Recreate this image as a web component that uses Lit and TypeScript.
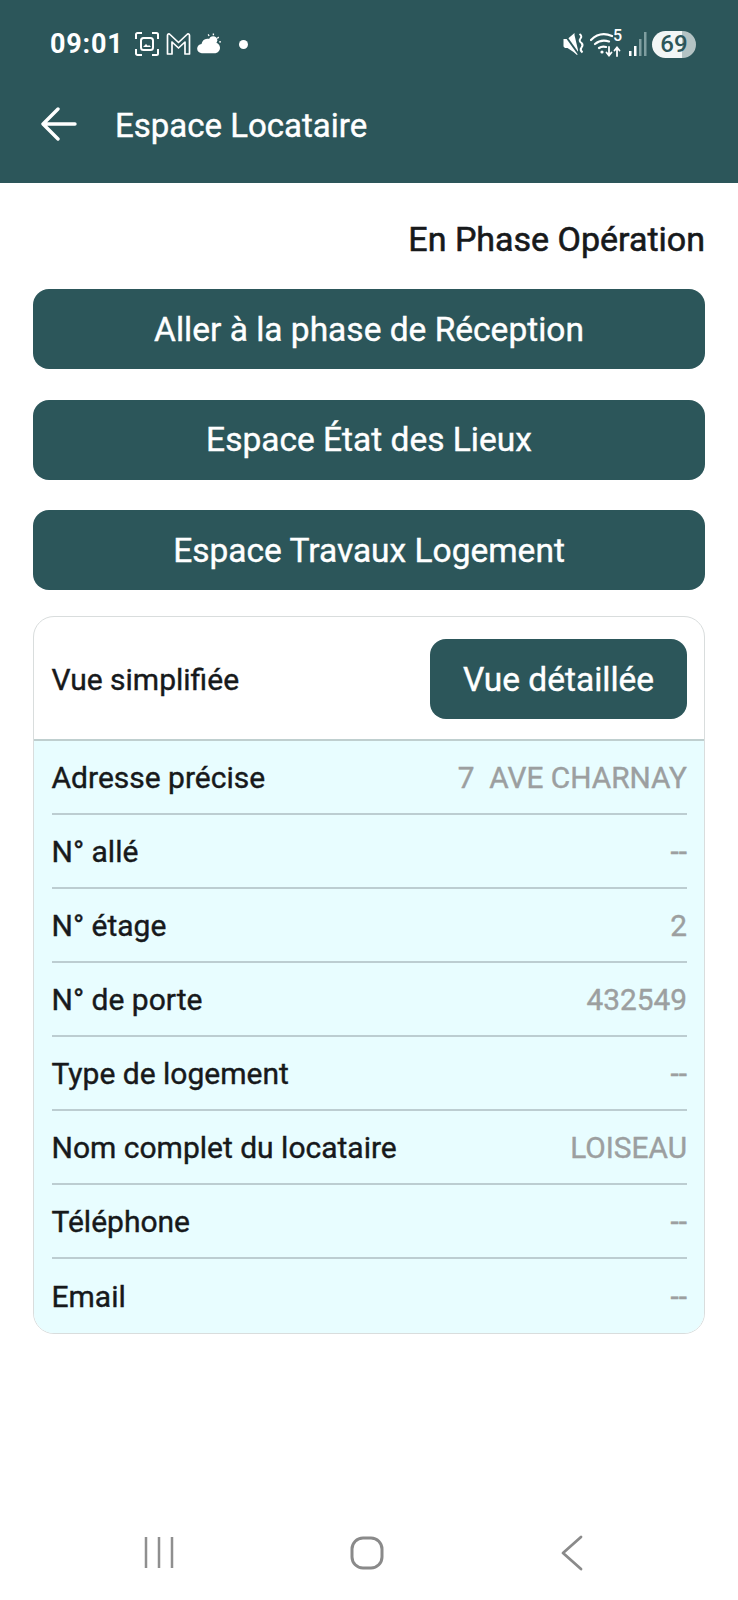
import { LitElement, html, css } from "lit";
import { customElement } from "lit/decorators.js";

const rows: [string, string][] = [
  ["Adresse précise", "7\u00a0 AVE CHARNAY"],
  ["N° allé", "--"],
  ["N° étage", "2"],
  ["N° de porte", "432549"],
  ["Type de logement", "--"],
  ["Nom complet du locataire", "LOISEAU"],
  ["Téléphone", "--"],
  ["Email", "--"],
];

@customElement("app-root")
export class AppRoot extends LitElement {
  static styles = css`
    :host {
      display: flex;
      flex-direction: column;
      width: 738px;
      height: 1600px;
      background: #fff;
      font-family: Roboto, "Liberation Sans", sans-serif;
      color: #17191b;
      overflow: hidden;
    }
    .top {
      background: #2c565a;
      height: 183px;
      box-sizing: border-box;
      color: #fff;
      flex: none;
    }
    .status {
      height: 88px;
      box-sizing: border-box;
      padding: 0 42px 0 50px;
      display: flex;
      align-items: center;
    }
    .time { font-size: 27px; font-weight: 700; letter-spacing: 0.8px; margin-right: 5px; }
    .status svg { display: block; flex: none; }
    .st-left { display: flex; align-items: center; gap: 5px; flex: 1; }
    .dot { width: 9px; height: 9px; border-radius: 50%; background: #fff; margin-left: 13px; }
    .st-right { display: flex; align-items: center; gap: 5px; }
    .wifi { position: relative; width: 34px; height: 28px; flex: none; }
    .wifi-five {
      position: absolute;
      right: 2px;
      top: -3px;
      font-size: 16px;
      line-height: 18px;
      font-weight: 500;
      color: #fff;
    }
    .batt {
      width: 44px; height: 27px; border-radius: 14px;
      background: linear-gradient(90deg, #f2f6f6 0 69%, #b4c3c4 69% 100%);
      color: #2c565a; font-size: 24px; font-weight: 500;
      display: flex; align-items: center; justify-content: center;
    }
    .bar { display: flex; align-items: center; height: 72px; padding: 0 0 0 41px; }
    .bar svg { display: block; }
    .title { font-size: 33px; margin-left: 38px; font-weight: 400; margin-top: 3px; -webkit-text-stroke: 0.4px currentColor; }
    main {
      flex: 1;
      padding: 0 33px;
      display: flex;
      flex-direction: column;
    }
    .phase {
      text-align: right;
      font-size: 34px;
      font-weight: 400;
      -webkit-text-stroke: 0.6px currentColor;
      line-height: 36px;
      margin-top: 38px;
      margin-bottom: 32px;
    }
    .btn {
      background: #2c565a;
      color: #fff;
      height: 80px;
      border-radius: 16px;
      display: flex;
      align-items: center;
      justify-content: center;
      font-size: 33.500px;
      font-weight: 400;
      -webkit-text-stroke: 0.4px currentColor;
      margin-bottom: 30.500px;
    }
    .card {
      margin-top: -5px;
      border: 1.500px solid #d9dddd;
      border-radius: 21px;
      overflow: hidden;
    }
    .card-head {
      display: flex;
      justify-content: space-between;
      align-items: center;
      height: 124px;
      box-sizing: border-box;
      padding: 3px 17px 0 17.500px;
      border-bottom: 2px solid #bfcfcf;
      font-size: 30px;
      font-weight: 400;
      -webkit-text-stroke: 0.4px currentColor;
    }
    .toggle {
      background: #2c565a;
      color: #fff;
      width: 257px;
      height: 80px;
      border-radius: 16px;
      display: flex;
      align-items: center;
      justify-content: center;
      font-size: 33.500px;
    }
    .list { background: #e8fdff; padding: 0 17px 0 17.500px; }
    .row {
      height: 74px;
      box-sizing: border-box;
      display: flex;
      justify-content: space-between;
      align-items: center;
      padding-top: 2px;
      border-bottom: 2px solid #bccdd1;
      font-size: 30px;
      font-weight: 400;
      -webkit-text-stroke: 0.4px currentColor;
    }
    .row:last-child { border-bottom: none; }
    .val { color: #9c9fa0; font-size: 29.800px; }
    .nav {
      height: 100px;
      flex: none;
      display: flex;
      align-items: center;
      justify-content: center;
      box-sizing: border-box;
      padding: 6px 12px 0 0;
    }
    .nav svg { display: block; }
    .nav-inner { display: flex; width: 440px; justify-content: space-between; align-items: center; }
  `;

  render() {
    return html`
      <div class="top">
        <div class="status">
          <div class="st-left">
            <span class="time">09:01</span>
            <svg width="26" height="26" viewBox="0 0 26 26" fill="none" stroke="#fff" stroke-width="2">
              <path d="M2 8V3.500C2 2.700 2.700 2 3.500 2H8M18 2h4.500C23.300 2 24 2.700 24 3.500V8M24 18v4.500c0 .8-.7 1.500-1.500 1.500H18M8 24H3.500C2.700 24 2 23.300 2 22.500V18"/>
              <rect x="7" y="7" width="12" height="12" rx="2.500"/>
              <path d="M9 16l3-3 2 2 1-1 2 2z" fill="#fff" stroke="none"/>
            </svg>
            <svg width="27" height="24" viewBox="0 0 26 24" fill="none" stroke="#fff" stroke-width="1.700" stroke-linejoin="round">
              <path d="M2 22V3.500C2 2 3.500 1.500 4.500 2.500L13 10.500 21.500 2.500C22.500 1.500 24 2 24 3.500V22H19.500V10L13 16 6.500 10V22Z"/>
            </svg>
            <svg width="24" height="24" viewBox="0 0 26 24" fill="#fff">
              <path d="M5.500 22a5 5 0 0 1-.6-10 7 7 0 0 1 13.300-1.500A5.800 5.800 0 0 1 20 22Z"/>
              <circle cx="17.500" cy="8" r="4.500"/>
              <path d="M17 .5h1.500v2H17zM23 4l1 1-1.500 1.500-1-1zM24 9h2v1.500h-2zM11.500 2l1.200-.7 1 1.700-1.200.7z"/>
            </svg>
            <span class="dot"></span>
          </div>
          <div class="st-right">
            <svg width="23" height="26" viewBox="0 0 22 26" fill="#fff">
              <path d="M1 8h4l7-6v2l3.500 15v4l-1 1L11 21l-6-4H2.500L1 15.500Z"/>
              <path d="M1 2l15 21" stroke="#2c565a" stroke-width="2"/>
              <path d="M17 3q3 2 1 4.500t1 4.500q2 2 0 4.500t1 5" fill="none" stroke="#fff" stroke-width="2"/>
            </svg>
            <span class="wifi">
              <svg width="34" height="28" viewBox="0 0 34 28" fill="none" stroke="#fff" stroke-width="2.200" stroke-linecap="round">
                <path d="M1 10Q10 1 22 6M5 14q6-5 14-2.500M9 18q3-2 7-1"/>
                <circle cx="12" cy="22" r="1.600" fill="#fff" stroke="none"/>
                <path d="M19 17v8M16.500 22.500l2.500 3 2.500-3M27 26v-8M24.500 20.500l2.500-3 2.500 3" stroke-width="1.800"/>
              </svg>
              <span class="wifi-five">5</span>
            </span>
            <svg width="18" height="26" viewBox="0 0 18 26">
              <rect x="0" y="20" width="2.500" height="5" fill="#fff"/>
              <rect x="5" y="15" width="2.500" height="10" fill="#fff"/>
              <rect x="10" y="8" width="2.500" height="17" fill="#7f9ea0"/>
              <rect x="15" y="1" width="2.500" height="24" fill="#7f9ea0"/>
            </svg>
            <span class="batt">69</span>
          </div>
        </div>
        <div class="bar">
          <svg width="36" height="34" viewBox="0 0 36 34" fill="none" stroke="#fff" stroke-width="3.400" stroke-linecap="round" stroke-linejoin="round">
            <path d="M34 17H3M17 2L2 17l15 15"/>
          </svg>
          <span class="title">Espace Locataire</span>
        </div>
      </div>
      <main>
        <div class="phase">En Phase Opération</div>
        <div class="btn">Aller à la phase de Réception</div>
        <div class="btn">Espace État des Lieux</div>
        <div class="btn">Espace Travaux Logement</div>
        <div class="card">
          <div class="card-head">
            <span>Vue simplifiée</span>
            <span class="toggle">Vue détaillée</span>
          </div>
          <div class="list">
            ${rows.map(([k, v]) => html`<div class="row"><span>${k}</span><span class="val">${v}</span></div>`)}
          </div>
        </div>
      </main>
      <div class="nav">
        <div class="nav-inner">
          <svg width="32" height="34" viewBox="0 0 32 34" stroke="#8f8f8f" stroke-width="2.500"><path d="M3 1v31M16 1v31M29 1v31"/></svg>
          <svg width="34" height="34" viewBox="0 0 34 34" fill="none" stroke="#8a8a8a" stroke-width="3"><rect x="2" y="2" width="30" height="30" rx="11"/></svg>
          <svg width="24" height="36" viewBox="0 0 24 36" fill="none" stroke="#8a8a8a" stroke-width="2.800" stroke-linecap="round" stroke-linejoin="round"><path d="M22 2L4 18l18 16"/></svg>
        </div>
      </div>
    `;
  }
}
